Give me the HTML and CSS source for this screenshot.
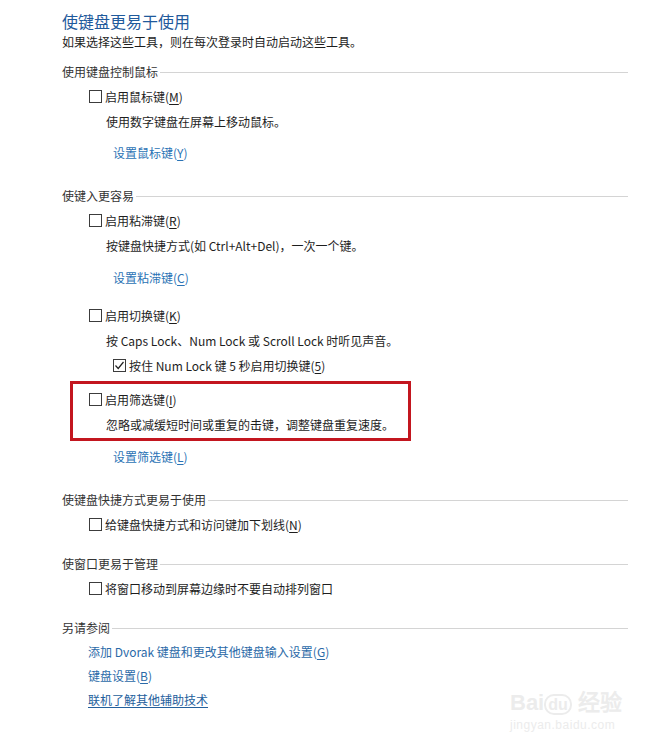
FILE: index.html
```html
<!DOCTYPE html>
<html lang="zh-CN">
<head>
    <meta charset="UTF-8">
    <title>使键盘更易于使用</title>
    <link rel="stylesheet" href="styles.css">
</head>
<body>
    <div class="page">
        <h1 class="title">使键盘更易于使用</h1>
        <div class="subtitle">如果选择这些工具，则在每次登录时自动启动这些工具。</div>

        <!-- 鼠标键 -->
        <div class="section sec-first">使用键盘控制鼠标</div>
        <div class="row"><span class="cb"></span>启用鼠标键(<u>M</u>)</div>
        <div class="desc">使用数字键盘在屏幕上移动鼠标。</div>
        <a class="link">设置鼠标键(<u>Y</u>)</a>

        <!-- 键入 -->
        <div class="section sec-gap">使键入更容易</div>
        <div class="row"><span class="cb"></span>启用粘滞键(<u>R</u>)</div>
        <div class="desc">按键盘快捷方式(如 Ctrl+Alt+Del)，一次一个键。</div>
        <a class="link link-loose">设置粘滞键(<u>C</u>)</a>

        <div class="row row-after-link"><span class="cb"></span>启用切换键(<u>K</u>)</div>
        <div class="desc">按 Caps Lock、Num Lock 或 Scroll Lock 时听见声音。</div>
        <div class="row row-sub"><span class="cb checked"><svg width="11" height="11" viewBox="0 0 11 11"><path d="M1.5 5.5 L4.2 8.5 L9.5 2" fill="none" stroke="#222" stroke-width="1.2"/></svg></span>按住 Num Lock 键 5 秒启用切换键(<u>5</u>)</div>

        <div class="highlight">
            <div class="row"><span class="cb"></span>启用筛选键(<u>I</u>)</div>
            <div class="desc">忽略或减缓短时间或重复的击键，调整键盘重复速度。</div>
        </div>
        <a class="link link-tight">设置筛选键(<u>L</u>)</a>

        <!-- 快捷方式 -->
        <div class="section sec-gap">使键盘快捷方式更易于使用</div>
        <div class="row"><span class="cb"></span>给键盘快捷方式和访问键加下划线(<u>N</u>)</div>

        <!-- 窗口 -->
        <div class="section sec-small">使窗口更易于管理</div>
        <div class="row"><span class="cb"></span>将窗口移动到屏幕边缘时不要自动排列窗口</div>

        <!-- 另请参阅 -->
        <div class="section sec-small">另请参阅</div>
        <div class="see-also">
            <a class="see-link">添加 Dvorak 键盘和更改其他键盘输入设置(<u>G</u>)</a>
            <a class="see-link">键盘设置(<u>B</u>)</a>
            <a class="see-link see-online">联机了解其他辅助技术</a>
        </div>
    </div>

    <div class="watermark">
        <div class="wm-logo">Bai<span class="wm-du">du</span> 经验</div>
        <div class="wm-url">jingyan.baidu.com</div>
    </div>
</body>
</html>
```

FILE: styles.css
```css
body {
    margin: 0;
    background: #ffffff;
    font-family: "Noto Sans CJK SC", "Microsoft YaHei", sans-serif;
    font-size: 12px;
    color: #1e1e1e;
}
.page {
    padding: 10px 34px 0 62px;
    position: relative;
}
.title {
    margin: 0;
    font-size: 16px;
    font-weight: normal;
    line-height: 22px;
    color: #1f5a9c;
}
.subtitle {
    line-height: 20px;
}
/* Section headers with rule */
.section {
    display: flex;
    align-items: center;
    line-height: 24px;
    color: #333333;
}
.section::after {
    content: "";
    flex: 1;
    height: 1px;
    margin-left: 2px;
    background: #d4d4d4;
}
.sec-first {
    margin-top: 8px;
}
.sec-gap {
    margin-top: 19px;
}
.sec-small {
    margin-top: 15px;
}
/* Checkbox rows */
.row {
    display: flex;
    align-items: center;
    line-height: 25px;
    padding-left: 27px;
}
.row-after-link {
    margin-top: 13px;
}
.row-sub {
    padding-left: 51px;
}
.cb {
    display: inline-flex;
    align-items: center;
    justify-content: center;
    width: 11px;
    height: 11px;
    border: 1px solid #3c3c3c;
    background: #ffffff;
    margin-right: 3px;
    flex-shrink: 0;
}
.desc {
    line-height: 25px;
    padding-left: 44px;
}
.link {
    display: block;
    line-height: 25px;
    padding-left: 51px;
    margin-top: 6px;
    color: #2b73b5;
    cursor: pointer;
}
.link-loose {
    margin-top: 7px;
}
.link-tight {
    margin-top: 3px;
}
u {
    text-decoration-thickness: 1px;
    text-underline-offset: 2px;
}
/* Red highlight frame */
.highlight {
    margin: 3px 0 0 8px;
    width: 335px;
    border: 3px solid #c3161f;
    padding: 3px 0 1px 0;
}
.highlight .row {
    padding-left: 16px;
}
.highlight .desc {
    padding-left: 33px;
}
/* See also */
.see-also {
    display: flex;
    flex-direction: column;
    padding-left: 26px;
}
.see-link {
    line-height: 24px;
    color: #2b6aa8;
    cursor: pointer;
}
.see-online {
    text-decoration: underline;
    text-underline-offset: 2px;
    color: #24609c;
}
/* Watermark */
.watermark {
    position: absolute;
    left: 510px;
    top: 691px;
    color: #ececec;
    font-family: "Liberation Sans", sans-serif;
}
.wm-logo {
    font-size: 22px;
    font-weight: bold;
    line-height: 24px;
}
.wm-du {
    border: 2px solid #ececec;
    border-radius: 10px;
    padding: 0 2px;
    font-size: 16px;
}
.wm-url {
    font-size: 12px;
    line-height: 16px;
    letter-spacing: 0.5px;
}
```
